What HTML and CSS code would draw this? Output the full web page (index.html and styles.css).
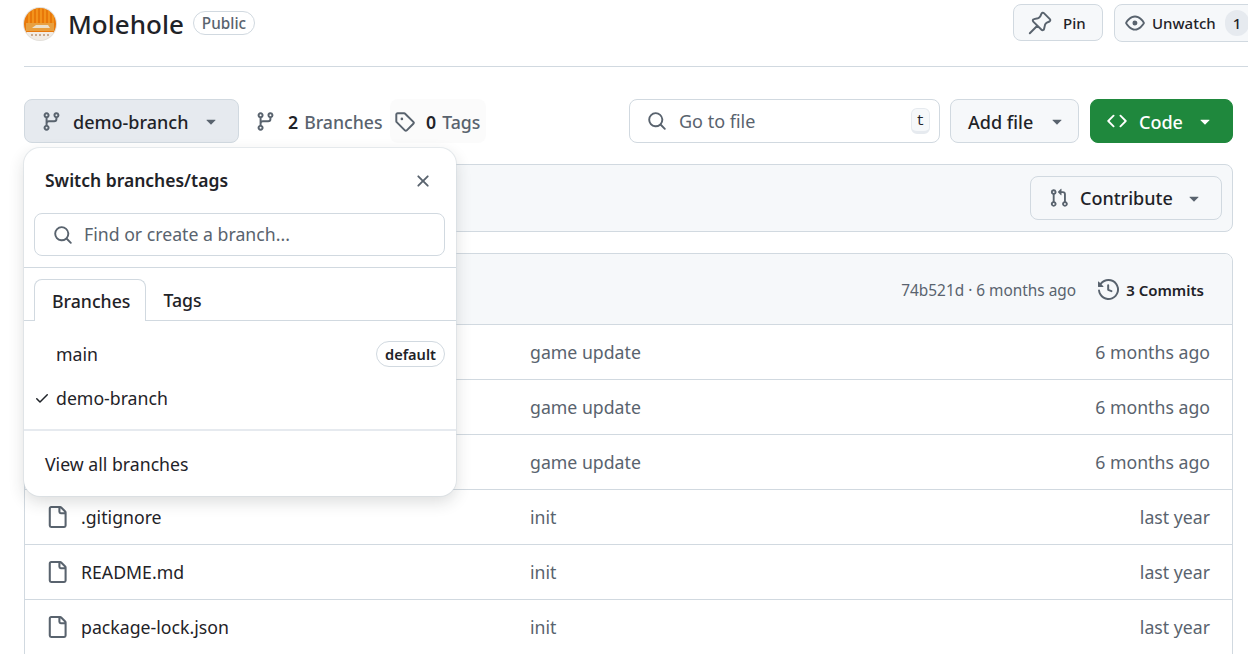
FILE: index.html
```html
<!DOCTYPE html>
<html lang="en">
<head>
  <meta charset="UTF-8">
  <title>Molehole</title>
  <meta name="viewport" content="width=device-width, initial-scale=1.0">
  <link rel="stylesheet" href="styles.css">
</head>
<body>
  <!-- Octicons, reused below -->
  <svg class="sprite" aria-hidden="true">
    <symbol id="i-branch" viewBox="0 0 16 16"><path d="M9.5 3.25a2.25 2.25 0 1 1 3 2.122V6A2.5 2.5 0 0 1 10 8.5H6a1 1 0 0 0-1 1v1.128a2.251 2.251 0 1 1-1.5 0V5.372a2.25 2.25 0 1 1 1.5 0v1.836A2.493 2.493 0 0 1 6 7h4a1 1 0 0 0 1-1v-.628A2.25 2.25 0 0 1 9.5 3.25Zm-6 0a.75.75 0 1 0 1.5 0 .75.75 0 0 0-1.5 0Zm8.25-.75a.75.75 0 1 0 0 1.5.75.75 0 0 0 0-1.5ZM4.25 12a.75.75 0 1 0 0 1.5.75.75 0 0 0 0-1.5Z"/></symbol>
    <symbol id="i-tag" viewBox="0 0 16 16"><path d="M1 7.775V2.75C1 1.784 1.784 1 2.75 1h5.025c.464 0 .91.184 1.238.513l6.25 6.25a1.75 1.75 0 0 1 0 2.474l-5.026 5.026a1.75 1.75 0 0 1-2.474 0l-6.25-6.25A1.752 1.752 0 0 1 1 7.775Zm1.5 0c0 .066.026.13.073.177l6.25 6.25a.25.25 0 0 0 .354 0l5.025-5.025a.25.25 0 0 0 0-.354l-6.25-6.25a.25.25 0 0 0-.177-.073H2.75a.25.25 0 0 0-.25.25ZM6 5a1 1 0 1 1 0 2 1 1 0 0 1 0-2Z"/></symbol>
    <symbol id="i-search" viewBox="0 0 16 16"><path d="M10.68 11.74a6 6 0 0 1-7.922-8.982 6 6 0 0 1 8.982 7.922l3.04 3.04a.749.749 0 0 1-.326 1.275.749.749 0 0 1-.734-.215ZM11.5 7a4.499 4.499 0 1 0-8.997 0A4.499 4.499 0 0 0 11.5 7Z"/></symbol>
    <symbol id="i-pin" viewBox="0 0 16 16"><path fill="none" stroke="currentColor" stroke-width="1.3" stroke-linejoin="round" stroke-linecap="round" d="M10.6 1.4l4 4a1 1 0 0 1-.3 1.6l-1.7.8a2.5 2.5 0 0 0-1.3 1.6l-.6 2.6a1 1 0 0 1-1.7.5L3.5 7.1a1 1 0 0 1 .5-1.7l2.6-.6a2.5 2.5 0 0 0 1.6-1.3l.8-1.8a1 1 0 0 1 1.6-.3ZM6.2 9.8l-5 5"/></symbol>
    <symbol id="i-eye" viewBox="0 0 16 16"><path d="M8 2c1.981 0 3.671.992 4.933 2.078 1.27 1.091 2.187 2.345 2.637 3.023a1.62 1.62 0 0 1 0 1.798c-.45.678-1.367 1.932-2.637 3.023C11.67 13.008 9.981 14 8 14c-1.981 0-3.671-.992-4.933-2.078C1.797 10.83.88 9.576.43 8.898a1.62 1.62 0 0 1 0-1.798c.45-.677 1.367-1.931 2.637-3.022C4.33 2.992 6.019 2 8 2ZM1.679 7.932a.12.12 0 0 0 0 .136c.411.622 1.241 1.75 2.366 2.717C5.176 11.758 6.527 12.5 8 12.5c1.473 0 2.825-.742 3.955-1.715 1.124-.967 1.954-2.096 2.366-2.717a.12.12 0 0 0 0-.136c-.412-.621-1.242-1.75-2.366-2.717C10.824 4.242 9.473 3.5 8 3.5c-1.473 0-2.825.742-3.955 1.715-1.124.967-1.954 2.096-2.366 2.717ZM8 10a2 2 0 1 1-.001-3.999A2 2 0 0 1 8 10Z"/></symbol>
    <symbol id="i-code" viewBox="0 0 16 16"><path d="m11.28 3.22 4.25 4.25a.75.75 0 0 1 0 1.06l-4.25 4.25a.749.749 0 0 1-1.275-.326.749.749 0 0 1 .215-.734L13.94 8l-3.72-3.72a.749.749 0 0 1 .326-1.275.749.749 0 0 1 .734.215Zm-6.56 0a.751.751 0 0 1 1.042.018.751.751 0 0 1 .018 1.042L2.06 8l3.72 3.72a.749.749 0 0 1-.326 1.275.749.749 0 0 1-.734-.215L.47 8.53a.75.75 0 0 1 0-1.06Z"/></symbol>
    <symbol id="i-pr" viewBox="0 0 16 16"><path d="M1.5 3.25a2.25 2.25 0 1 1 3 2.122v5.256a2.251 2.251 0 1 1-1.5 0V5.372A2.25 2.25 0 0 1 1.5 3.25Zm5.677-.177L9.573.677A.25.25 0 0 1 10 .854V2.5h1A2.5 2.5 0 0 1 13.5 5v5.628a2.251 2.251 0 1 1-1.5 0V5a1 1 0 0 0-1-1h-1v1.646a.25.25 0 0 1-.427.177L7.177 3.427a.25.25 0 0 1 0-.354ZM3.75 2.5a.75.75 0 1 0 0 1.5.75.75 0 0 0 0-1.5Zm0 9.5a.75.75 0 1 0 0 1.5.75.75 0 0 0 0-1.5Zm8.25.75a.75.75 0 1 0 1.5 0 .75.75 0 0 0-1.5 0Z"/></symbol>
    <symbol id="i-history" viewBox="0 0 16 16"><path d="m.427 1.927 1.215 1.215a8.002 8.002 0 1 1-1.6 5.685.75.75 0 1 1 1.493-.154 6.5 6.5 0 1 0 1.18-4.458l1.358 1.358A.25.25 0 0 1 3.896 6H.25A.25.25 0 0 1 0 5.75V2.104a.25.25 0 0 1 .427-.177ZM7.75 4a.75.75 0 0 1 .75.75v2.992l2.028.812a.75.75 0 0 1-.557 1.392l-2.5-1A.751.751 0 0 1 7 8.25v-3.5A.75.75 0 0 1 7.75 4Z"/></symbol>
    <symbol id="i-file" viewBox="0 0 16 16"><path d="M2 1.75C2 .784 2.784 0 3.75 0h6.586c.464 0 .909.184 1.237.513l2.914 2.914c.329.328.513.773.513 1.237v9.586A1.75 1.75 0 0 1 13.25 16h-9.5A1.75 1.75 0 0 1 2 14.25Zm1.75-.25a.25.25 0 0 0-.25.25v12.5c0 .138.112.25.25.25h9.5a.25.25 0 0 0 .25-.25V6h-2.75A1.75 1.75 0 0 1 9 4.25V1.5Zm6.75.062V4.25c0 .138.112.25.25.25h2.688l-.011-.013-2.914-2.914-.013-.011Z"/></symbol>
    <symbol id="i-x" viewBox="0 0 16 16"><path d="M3.72 3.72a.75.75 0 0 1 1.06 0L8 6.94l3.22-3.22a.749.749 0 0 1 1.275.326.749.749 0 0 1-.215.734L9.06 8l3.22 3.22a.749.749 0 0 1-.326 1.275.749.749 0 0 1-.734-.215L8 9.06l-3.22 3.22a.751.751 0 0 1-1.042-.018.751.751 0 0 1-.018-1.042L6.94 8 3.72 4.78a.75.75 0 0 1 0-1.06Z"/></symbol>
    <symbol id="i-check" viewBox="0 0 16 16"><path d="M13.78 4.22a.75.75 0 0 1 0 1.06l-7.25 7.25a.75.75 0 0 1-1.06 0L2.22 9.28a.751.751 0 0 1 .018-1.042.751.751 0 0 1 1.042-.018L6 10.94l6.72-6.72a.75.75 0 0 1 1.06 0Z"/></symbol>
    <symbol id="i-caret" viewBox="0 0 16 16"><path d="m4.427 7.427 3.396 3.396a.25.25 0 0 0 .354 0l3.396-3.396A.25.25 0 0 0 11.396 7H4.604a.25.25 0 0 0-.177.427Z"/></symbol>
  </svg>

  <!-- Cabeçalho do repositório -->
  <header class="repo-head">
    <svg class="avatar" viewBox="0 0 34 34">
      <defs><clipPath id="round"><circle cx="17" cy="17" r="16"/></clipPath></defs>
      <circle cx="17" cy="17" r="17" fill="#e3e0db"/>
      <g clip-path="url(#round)">
        <rect width="34" height="26" fill="#e8780a"/>
        <path d="M6 0v17M10 0v17M14 0v17M18 0v17M22 0v17M26 0v17M30 0v17" stroke="#f59a20" stroke-width="1.6"/>
        <rect x="3" y="16" width="28" height="8" fill="#e8a040"/>
        <path d="M9 21l4-3h12l2 3Z" fill="#ece0ca"/>
        <rect y="25" width="34" height="9" fill="#f1ebe4"/>
        <path d="M8 28h18" stroke="#c9a98c" stroke-width="2" stroke-dasharray="2 2"/>
      </g>
    </svg>
    <h1 class="repo-name">Molehole</h1>
    <span class="pill pill-public">Public</span>
    <div class="repo-actions">
      <button class="btn btn-pin"><svg class="ico ico-pin"><use href="#i-pin"/></svg>Pin</button>
      <button class="btn btn-watch"><svg class="ico"><use href="#i-eye"/></svg>Unwatch<span class="count">1</span></button>
    </div>
  </header>

  <main class="content">
    <div class="toolbar">
      <button class="btn btn-branch"><svg class="ico ico-md"><use href="#i-branch"/></svg><span class="grow">demo-branch</span><svg class="ico caret"><use href="#i-caret"/></svg></button>
      <a class="stat stat-branches"><svg class="ico ico-md"><use href="#i-branch"/></svg><b>2</b> Branches</a>
      <a class="stat stat-tags"><svg class="ico ico-md"><use href="#i-tag"/></svg><b>0</b> Tags</a>
      <div class="goto">
        <svg class="ico"><use href="#i-search"/></svg>
        <span class="grow">Go to file</span>
        <kbd>t</kbd>
      </div>
      <button class="btn btn-add"><span class="grow">Add file</span><svg class="ico caret"><use href="#i-caret"/></svg></button>
      <button class="btn btn-code"><svg class="ico"><use href="#i-code"/></svg><span class="grow">Code</span><svg class="ico caret"><use href="#i-caret"/></svg></button>
    </div>

    <div class="branch-bar">
      <button class="btn btn-contribute"><svg class="ico"><use href="#i-pr"/></svg><span class="grow">Contribute</span><svg class="ico caret"><use href="#i-caret"/></svg></button>
    </div>

    <section class="files">
      <div class="files-head">
        <span class="commit-info">74b521d · 6 months ago</span>
        <span class="commits"><svg class="ico"><use href="#i-history"/></svg>3 Commits</span>
      </div>
      <div class="file-row"><span class="file-name"></span><span class="file-msg">game update</span><span class="file-date">6 months ago</span></div>
      <div class="file-row"><span class="file-name"></span><span class="file-msg">game update</span><span class="file-date">6 months ago</span></div>
      <div class="file-row"><span class="file-name"></span><span class="file-msg">game update</span><span class="file-date">6 months ago</span></div>
      <div class="file-row"><span class="file-name"><svg class="ico"><use href="#i-file"/></svg>.gitignore</span><span class="file-msg">init</span><span class="file-date">last year</span></div>
      <div class="file-row"><span class="file-name"><svg class="ico"><use href="#i-file"/></svg>README.md</span><span class="file-msg">init</span><span class="file-date">last year</span></div>
      <div class="file-row"><span class="file-name"><svg class="ico"><use href="#i-file"/></svg>package-lock.json</span><span class="file-msg">init</span><span class="file-date">last year</span></div>
    </section>
  </main>

  <!-- Menu de troca de branch, aberto sobre a lista -->
  <div class="popover">
    <div class="pop-title">
      <span class="grow">Switch branches/tags</span>
      <svg class="ico"><use href="#i-x"/></svg>
    </div>
    <div class="pop-search-wrap">
      <div class="pop-search">
        <svg class="ico"><use href="#i-search"/></svg>
        <span>Find or create a branch...</span>
      </div>
    </div>
    <div class="pop-tabs">
      <span class="tab tab-active">Branches</span>
      <span class="tab">Tags</span>
    </div>
    <ul class="pop-list">
      <li><span class="check"></span><span class="grow">main</span><span class="pill pill-default">default</span></li>
      <li><span class="check"><svg class="ico"><use href="#i-check"/></svg></span><span class="grow">demo-branch</span></li>
    </ul>
    <div class="pop-foot">View all branches</div>
  </div>
</body>
</html>
```

FILE: styles.css
```css
/* Reset básico */
* {
  box-sizing: border-box;
  margin: 0;
  padding: 0;
}

html, body {
  height: 654px;
  overflow: hidden;
}

body {
  position: relative;
  font-family: "Noto Sans", Arial, sans-serif;
  font-size: 17.7px;
  color: #1f2328;
  background: #fff;
}

.sprite {
  display: none;
}

.ico {
  width: 20px;
  height: 20px;
  fill: currentColor;
  flex: none;
}

.ico-md {
  width: 21px;
  height: 21px;
}

.grow {
  flex: 1;
}

button {
  font: inherit;
}

/* Cabeçalho */
.repo-head {
  display: flex;
  align-items: center;
  height: 67px;
  margin-left: 24px;
  padding-bottom: 20px;
  border-bottom: 1px solid #d1d9e0;
}

.avatar {
  width: 34px;
  height: 34px;
  margin: 2px 0 0 -1px;
  flex: none;
}

.repo-name {
  margin: 2px 0 0 11px;
  font-size: 26px;
  font-weight: 500;
}

.pill {
  border: 1px solid #d1d9e0;
  border-radius: 20px;
  font-weight: 500;
}

.pill-public {
  margin-left: 9px;
  padding: 1px 8px;
  font-size: 15.3px;
  line-height: 20px;
  color: #59636e;
}

.repo-actions {
  display: flex;
  gap: 11px;
  margin-left: auto;
  width: 235px;
  height: 38px;
  overflow: hidden;
  flex: none;
}

/* Botões */
.btn {
  display: flex;
  align-items: center;
  border: 1px solid #d1d9e0;
  border-radius: 8px;
  background: #f6f8fa;
  color: #1f2328;
  font-size: 18px;
  font-weight: 500;
  text-align: left;
  white-space: nowrap;
  flex: none;
}

.btn .ico {
  color: #59636e;
}

.btn-pin {
  width: 90px;
  height: 37px;
  padding-left: 14px;
  gap: 11px;
  font-size: 15px;
}

.ico-pin {
  width: 24px;
  height: 24px;
}

.btn-watch {
  width: 150px;
  height: 38px;
  padding-left: 10px;
  gap: 7px;
  font-size: 15px;
}

.count {
  margin-left: 2px;
  padding: 0 8px;
  height: 26px;
  line-height: 26px;
  border-radius: 13px;
  background: #e6eaef;
}

.content {
  padding: 32px 15px 0 24px;
}

.toolbar {
  display: flex;
  align-items: center;
  height: 44px;
}

.toolbar .btn .grow {
  padding-top: 2px;
}

.btn-branch {
  width: 215px;
  height: 44px;
  padding: 0 17px 0 16px;
  gap: 11px;
  background: #e6eaef;
}

.caret {
  width: 20px;
}

.stat {
  display: flex;
  align-items: center;
  height: 44px;
  padding-top: 2px;
  gap: 11px;
  color: #59636e;
  font-weight: 500;
  white-space: nowrap;
}

.stat b {
  margin-right: -6px;
  color: #1f2328;
  font-weight: 600;
}

.stat .ico {
  margin-top: -2px;
  color: #59636e;
}

.stat-branches {
  margin-left: 16px;
  width: 135px;
  gap: 12px;
}

.stat-tags {
  width: 96px;
  padding-left: 4px;
  border-radius: 8px;
  background: #fbfbfb;
}

.stat-tags b {
  margin-right: -5px;
}

.goto {
  display: flex;
  align-items: center;
  width: 311px;
  height: 44px;
  margin-left: auto;
  padding: 0 9px 0 17px;
  gap: 12px;
  border: 1px solid #d1d9e0;
  border-radius: 8px;
  font-size: 18px;
  color: #59636e;
}

.goto .ico {
  color: #59636e;
}

kbd {
  width: 19px;
  height: 26px;
  line-height: 24px;
  text-align: center;
  border: 1px solid #e6eaef;
  border-bottom-width: 3px;
  border-radius: 6px;
  background: #f6f8fa;
  font-family: "Liberation Mono", monospace;
  font-size: 14px;
  color: #1f2328;
}

.btn-add {
  width: 129px;
  height: 44px;
  margin-left: 10px;
  padding: 0 11px 0 17px;
}

.btn-code {
  width: 143px;
  height: 44px;
  margin-left: 11px;
  padding: 0 17px 0 16px;
  gap: 12px;
  background: #1f883d;
  border-color: #1f883d;
  color: #fff;
}

.btn-code .ico {
  color: #fff;
}

.branch-bar {
  display: flex;
  justify-content: flex-end;
  align-items: center;
  height: 68px;
  margin-top: 21px;
  padding-right: 10px;
  border: 1px solid #d1d9e0;
  border-radius: 8px;
  background: #f6f8fa;
}

.btn-contribute {
  width: 192px;
  height: 44px;
  padding: 0 17px 0 18px;
  gap: 11px;
}

/* Lista de arquivos */
.files {
  margin-top: 21px;
  border: 1px solid #d1d9e0;
  border-radius: 8px 8px 0 0;
}

.files-head {
  display: flex;
  align-items: center;
  justify-content: flex-end;
  height: 71px;
  padding-right: 28px;
  gap: 22px;
  border-bottom: 1px solid #d1d9e0;
  border-radius: 8px 8px 0 0;
  background: #f6f8fa;
}

.commit-info {
  padding-top: 2px;
  font-size: 15.4px;
  color: #59636e;
}

.commits {
  display: flex;
  align-items: center;
  padding-top: 2px;
  gap: 7px;
  font-size: 15px;
  font-weight: 600;
}

.commits .ico {
  width: 21px;
  height: 21px;
  margin-top: -2px;
  color: #59636e;
}

.file-row {
  display: grid;
  grid-template-columns: 484px 1fr auto;
  align-items: center;
  height: 55px;
  padding: 0 22px 0 21px;
  border-bottom: 1px solid #d1d9e0;
}

.file-name {
  display: flex;
  align-items: center;
  gap: 13px;
}

.file-name .ico {
  width: 22px;
  height: 22px;
  color: #59636e;
}

.file-msg, .file-date {
  color: #59636e;
}

/* Popover */
.popover {
  position: absolute;
  left: 24px;
  top: 148px;
  width: 432px;
  height: 348px;
  border-radius: 16px;
  background: #fff;
  box-shadow: 0 0 0 1px #d1d9e080, 0 6px 16px rgba(37, 41, 46, .16);
}

.pop-title {
  display: flex;
  align-items: center;
  height: 65px;
  padding: 0 23px 2px 21px;
  font-size: 17.5px;
  font-weight: 600;
}

.pop-title .ico {
  margin-top: 2px;
  color: #59636e;
}

.pop-search-wrap {
  padding: 0 11px 11px 10px;
  border-bottom: 1px solid #d1d9e0;
}

.pop-search {
  display: flex;
  align-items: center;
  height: 43px;
  padding-left: 18px;
  gap: 11px;
  border: 1px solid #d1d9e0;
  border-radius: 8px;
  color: #59636e;
}

.pop-search span {
  margin-bottom: 2px;
}

.pop-tabs {
  display: flex;
  height: 53px;
  padding: 11px 0 0 10px;
  border-bottom: 1px solid #d1d9e0;
}

.tab {
  display: flex;
  align-items: center;
  padding: 0 15px 0 17px;
  font-weight: 500;
}

.tab-active {
  margin-bottom: -1px;
  border: 1px solid #d1d9e0;
  border-bottom: 0;
  border-radius: 8px 8px 0 0;
  background: #fff;
}

.pop-list {
  list-style: none;
  padding: 11px 11px 9px 0;
  border-bottom: 2px solid #e6eaef;
}

.pop-list li {
  display: flex;
  align-items: center;
  height: 44px;
}

.check {
  display: flex;
  align-items: center;
  width: 32px;
  padding-left: 10px;
}

.check .ico {
  width: 16px;
  height: 16px;
}

.pill-default {
  padding: 2px 8px;
  font-size: 14.6px;
  font-weight: 600;
}

.pop-foot {
  display: flex;
  align-items: center;
  height: 64px;
  padding: 2px 0 0 21px;
}
```
